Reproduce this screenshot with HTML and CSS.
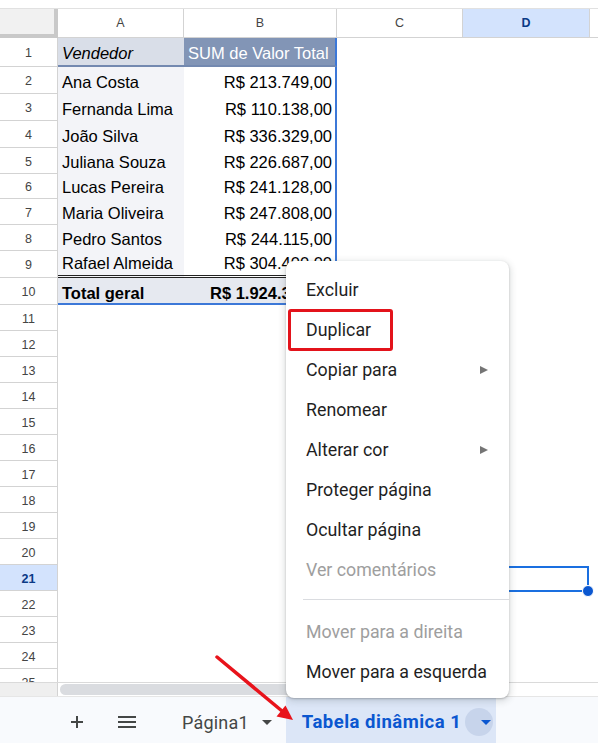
FILE: index.html
```html
<!DOCTYPE html>
<html lang="pt-BR">
<head>
<meta charset="utf-8">
<title>Tabela dinâmica</title>
<link rel="stylesheet" href="styles.css">
</head>
<body>
<div class="app">
  <div class="topstrip"></div>
  <div class="colhdr">
    <div class="corner"></div>
    <div class="ch">A</div>
    <div class="ch">B</div>
    <div class="ch">C</div>
    <div class="ch sel">D</div>
    <div class="ch last"></div>
  </div>
  <div class="grid">
    <div class="row h29"><div class="rh">1</div><div class="c pv-ha">Vendedor</div><div class="c pv-hb">SUM de Valor Total</div><div class="c"></div><div class="c"></div><div class="c"></div></div>
    <div class="row h27"><div class="rh">2</div><div class="c pv-a">Ana Costa</div><div class="c pv-b num">R$ 213.749,00</div><div class="c"></div><div class="c"></div><div class="c"></div></div>
    <div class="row h27"><div class="rh">3</div><div class="c pv-a">Fernanda Lima</div><div class="c pv-b num">R$ 110.138,00</div><div class="c"></div><div class="c"></div><div class="c"></div></div>
    <div class="row h27"><div class="rh">4</div><div class="c pv-a">João Silva</div><div class="c pv-b num">R$ 336.329,00</div><div class="c"></div><div class="c"></div><div class="c"></div></div>
    <div class="row h26"><div class="rh">5</div><div class="c pv-a">Juliana Souza</div><div class="c pv-b num">R$ 226.687,00</div><div class="c"></div><div class="c"></div><div class="c"></div></div>
    <div class="row h25"><div class="rh">6</div><div class="c pv-a">Lucas Pereira</div><div class="c pv-b num">R$ 241.128,00</div><div class="c"></div><div class="c"></div><div class="c"></div></div>
    <div class="row h26"><div class="rh">7</div><div class="c pv-a">Maria Oliveira</div><div class="c pv-b num">R$ 247.808,00</div><div class="c"></div><div class="c"></div><div class="c"></div></div>
    <div class="row h26"><div class="rh">8</div><div class="c pv-a">Pedro Santos</div><div class="c pv-b num">R$ 244.115,00</div><div class="c"></div><div class="c"></div><div class="c"></div></div>
    <div class="row h27"><div class="rh">9</div><div class="c pv-a pv-end">Rafael Almeida</div><div class="c pv-b num pv-end">R$ 304.400,00</div><div class="c"></div><div class="c"></div><div class="c"></div></div>
    <div class="row h27"><div class="rh">10</div><div class="c pv-tot">Total geral</div><div class="c pv-tot pv-b num">R$ 1.924.354,00</div><div class="c"></div><div class="c"></div><div class="c"></div></div>
    <div class="row"><div class="rh">11</div><div class="c"></div><div class="c"></div><div class="c"></div><div class="c"></div><div class="c"></div></div>
    <div class="row"><div class="rh">12</div><div class="c"></div><div class="c"></div><div class="c"></div><div class="c"></div><div class="c"></div></div>
    <div class="row"><div class="rh">13</div><div class="c"></div><div class="c"></div><div class="c"></div><div class="c"></div><div class="c"></div></div>
    <div class="row"><div class="rh">14</div><div class="c"></div><div class="c"></div><div class="c"></div><div class="c"></div><div class="c"></div></div>
    <div class="row"><div class="rh">15</div><div class="c"></div><div class="c"></div><div class="c"></div><div class="c"></div><div class="c"></div></div>
    <div class="row"><div class="rh">16</div><div class="c"></div><div class="c"></div><div class="c"></div><div class="c"></div><div class="c"></div></div>
    <div class="row"><div class="rh">17</div><div class="c"></div><div class="c"></div><div class="c"></div><div class="c"></div><div class="c"></div></div>
    <div class="row"><div class="rh">18</div><div class="c"></div><div class="c"></div><div class="c"></div><div class="c"></div><div class="c"></div></div>
    <div class="row"><div class="rh">19</div><div class="c"></div><div class="c"></div><div class="c"></div><div class="c"></div><div class="c"></div></div>
    <div class="row"><div class="rh">20</div><div class="c"></div><div class="c"></div><div class="c"></div><div class="c"></div><div class="c"></div></div>
    <div class="row"><div class="rh sel">21</div><div class="c"></div><div class="c"></div><div class="c"></div><div class="c selcell"></div><div class="c"></div></div>
    <div class="row"><div class="rh">22</div><div class="c"></div><div class="c"></div><div class="c"></div><div class="c"></div><div class="c"></div></div>
    <div class="row"><div class="rh">23</div><div class="c"></div><div class="c"></div><div class="c"></div><div class="c"></div><div class="c"></div></div>
    <div class="row"><div class="rh">24</div><div class="c"></div><div class="c"></div><div class="c"></div><div class="c"></div><div class="c"></div></div>
    <div class="row"><div class="rh">25</div><div class="c"></div><div class="c"></div><div class="c"></div><div class="c"></div><div class="c"></div></div>
  </div>
  <div class="hscroll">
    <div class="hs-left"></div>
    <div class="hs-track"><div class="thumb"></div></div>
  </div>
  <div class="tabs">
    <div class="tbtn add">
      <svg width="14" height="14" viewBox="0 0 14 14"><path d="M7 1v12M1 7h12" stroke="#444746" stroke-width="2" fill="none"/></svg>
    </div>
    <div class="tbtn list">
      <svg width="18" height="12" viewBox="0 0 18 12"><path d="M0 1h18M0 6h18M0 11h18" stroke="#444746" stroke-width="2" fill="none"/></svg>
    </div>
    <div class="tab">
      <span class="tab-name">Página1</span>
      <span class="caret"></span>
    </div>
    <div class="tab active">
      <span class="tab-name">Tabela dinâmica 1</span>
      <span class="caret-circle"><span class="caret blue"></span></span>
    </div>
  </div>

  <div class="menu">
    <div class="mi">Excluir</div>
    <div class="mi">Duplicar</div>
    <div class="mi">Copiar para<span class="subarrow"></span></div>
    <div class="mi">Renomear</div>
    <div class="mi">Alterar cor<span class="subarrow"></span></div>
    <div class="mi">Proteger página</div>
    <div class="mi">Ocultar página</div>
    <div class="mi dis">Ver comentários</div>
    <div class="sep"></div>
    <div class="mi dis">Mover para a direita</div>
    <div class="mi">Mover para a esquerda</div>
    <div class="redbox"></div>
  </div>

  <svg class="arrow" width="598" height="743" viewBox="0 0 598 743">
    <line x1="217" y1="657" x2="282" y2="711" stroke="#e8131b" stroke-width="3.5" stroke-linecap="round"/>
    <polygon points="293,720 276.5,716.5 285.5,705.5" fill="#e8131b"/>
  </svg>
</div>
</body>
</html>
```

FILE: styles.css
```css
* { box-sizing: border-box; }

body {
  margin: 0;
  width: 598px;
  height: 743px;
  overflow: hidden;
  background: #fff;
  font-family: "Liberation Sans", Arial, sans-serif;
}

.app {
  position: relative;
  width: 598px;
  height: 743px;
  overflow: hidden;
}

.topstrip {
  height: 9px;
  border-bottom: 1px solid #e1e1e1;
}

.colhdr,
.row {
  display: grid;
  grid-template-columns: 58px 126px 153px 126px 127px 1fr;
}

.colhdr { height: 29px; }

.corner {
  background: #f1f1f1;
  border-right: 4px solid #c9c9c9;
  border-bottom: 4px solid #c9c9c9;
}

.ch {
  display: flex;
  align-items: center;
  justify-content: center;
  border-right: 1px solid #d3d3d3;
  border-bottom: 1px solid #d3d3d3;
  font-size: 12.5px;
  color: #444;
}
.ch.last { border-right: none; }
.ch.sel {
  background: #d3e3fd;
  color: #0b3a86;
  font-weight: bold;
}

.grid {
  height: 644px;
  overflow: hidden;
}

.row { height: 26px; }
.row.h29 { height: 29px; }
.row.h27 { height: 27px; }
.row.h26 { height: 26px; }
.row.h25 { height: 25px; }

.rh {
  display: flex;
  align-items: center;
  justify-content: center;
  padding-top: 2px;
  border-right: 1px solid #d3d3d3;
  border-bottom: 1px solid #d3d3d3;
  font-size: 12.5px;
  color: #444;
}
.rh.sel {
  background: #d3e3fd;
  color: #0b3a86;
  font-weight: bold;
}

.c {
  display: flex;
  align-items: flex-end;
  padding: 0 4px 2px;
  font-size: 16.5px;
  line-height: 19px;
  color: #000;
  white-space: nowrap;
  overflow: hidden;
}
.c.num {
  justify-content: flex-end;
  padding-right: 3px;
}

.pv-ha {
  background: #d9dee8;
  font-style: italic;
  border-bottom: 2px solid #7389b0;
}
.pv-hb {
  background: #8295b6;
  color: #fff;
  border-bottom: 2px solid #7389b0;
  border-right: 2px solid #3c78d8;
}
.pv-a { background: #f3f4f8; }
.pv-b { border-right: 2px solid #3c78d8; }
.pv-end { border-bottom: 3px double #222; }
.pv-tot {
  background: #e6e9f0;
  font-weight: bold;
  padding-bottom: 0;
  border-bottom: 2px solid #3c78d8;
}

.selcell { position: relative; overflow: visible; }
.selcell::before {
  content: "";
  position: absolute;
  left: 0;
  right: 1px;
  top: 1px;
  bottom: -1px;
  border: 2px solid #1a6fe0;
}
.selcell::after {
  content: "";
  position: absolute;
  right: -4px;
  bottom: -6px;
  width: 10px;
  height: 10px;
  border-radius: 50%;
  background: #0b57d0;
  border: 1px solid #fff;
}

.hscroll {
  display: flex;
  height: 15px;
  border-top: 1px solid #dadada;
  border-bottom: 1px solid #e6e6e6;
}
.hs-left {
  width: 58px;
  background: #efefef;
  border-right: 1px solid #d3d3d3;
}
.hs-track {
  flex: 1;
  padding: 1px 0 0 2px;
}
.thumb {
  width: 400px;
  height: 11px;
  border-radius: 6px;
  background: #dadce0;
}

.tabs {
  display: flex;
  height: 46px;
  background: #f8fafd;
  padding-left: 58px;
  font-family: Roboto, "Liberation Sans", sans-serif;
}

.tbtn {
  width: 36px;
  display: flex;
  align-items: center;
  justify-content: center;
  padding-top: 4px;
}
.tbtn.add { margin-left: 1px; }
.tbtn.list { margin-left: 14px; }

.tab {
  display: flex;
  align-items: center;
  padding: 4px 14px 0 16px;
  margin-left: 21px;
  font-size: 18px;
  letter-spacing: 0.2px;
  color: #444746;
}
.tab .caret { margin-left: 13px; }

.tab.active {
  margin-left: 0;
  background: #dce6f7;
  padding: 4px 3px 0 16px;
  font-size: 18.5px;
  font-weight: bold;
  letter-spacing: 0.5px;
  color: #0b57d0;
}

.caret {
  width: 0;
  height: 0;
  border-left: 5px solid transparent;
  border-right: 5px solid transparent;
  border-top: 5px solid #444746;
}
.caret.blue { border-top-color: #0b57d0; }

.caret-circle {
  margin-left: 4px;
  width: 28px;
  height: 28px;
  border-radius: 50%;
  background: #c7d4eb;
  display: flex;
  align-items: center;
  justify-content: center;
}

.menu {
  position: absolute;
  left: 286px;
  top: 261px;
  width: 223px;
  padding: 8px 0 7px;
  background: #fff;
  border-radius: 8px;
  box-shadow: 0 2px 6px 2px rgba(60, 64, 67, 0.15), 0 1px 2px rgba(60, 64, 67, 0.3);
  font-family: Roboto, "Liberation Sans", sans-serif;
  font-size: 17.8px;
  color: #1f1f1f;
}

.mi {
  height: 40px;
  display: flex;
  align-items: center;
  justify-content: space-between;
  padding: 1px 21px 0 20px;
  white-space: nowrap;
}
.mi.dis { color: #9e9e9e; }

.subarrow {
  width: 0;
  height: 0;
  border-left: 8px solid #757575;
  border-top: 4.5px solid transparent;
  border-bottom: 4.5px solid transparent;
}

.sep {
  height: 1px;
  background: #dadce0;
  margin: 10px 0 11px 17px;
}

.redbox {
  position: absolute;
  left: 2px;
  top: 48px;
  width: 105px;
  height: 42px;
  border: 3.5px solid #e3131b;
  border-radius: 3px;
}

.arrow {
  position: absolute;
  left: 0;
  top: 0;
  pointer-events: none;
}
```
